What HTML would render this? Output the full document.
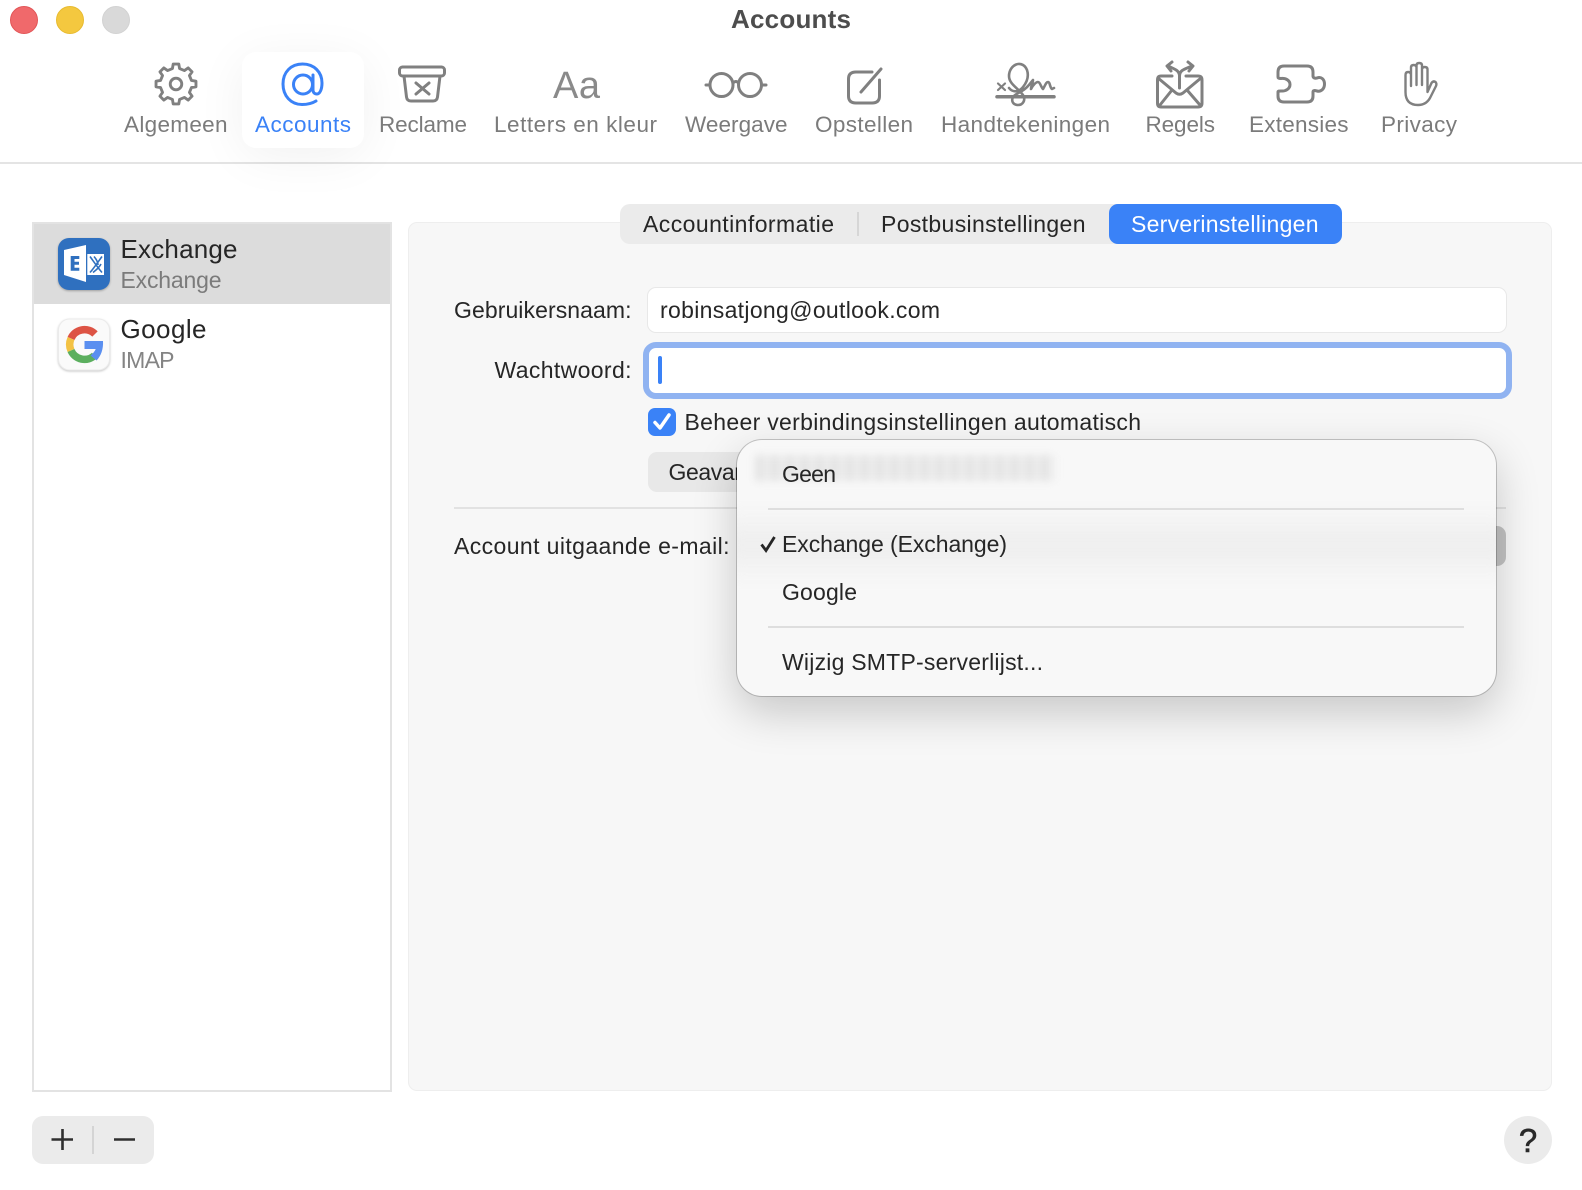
<!DOCTYPE html>
<html><head><meta charset="utf-8"><style>
html,body{margin:0;padding:0;background:#fff;width:1582px;height:1190px;overflow:hidden}
.a{position:absolute}
svg.a{left:0;top:0}
text{font-family:"Liberation Sans",sans-serif;font-size:23px;fill:#262626}
.tb{fill:#7b7b7b;font-size:22.5px}
.ic{fill:none;stroke:#808080;stroke-width:3;stroke-linecap:round;stroke-linejoin:round}
</style></head><body>
<div style="position:relative;width:1582px;height:1190px;overflow:hidden">
<div class="a" style="left:0;top:162px;width:1582px;height:2px;background:#e4e4e4"></div>
<div class="a" style="left:242px;top:52px;width:122px;height:96px;border-radius:14px;background:#fff;box-shadow:0 8px 50px rgba(0,0,0,.06)"></div>
<div class="a" style="left:32px;top:222px;width:356px;height:866px;border:2px solid #e3e3e3;background:#fff"></div>
<div class="a" style="left:34px;top:224px;width:356px;height:80px;background:#dcdcdc"></div>
<div class="a" style="left:408px;top:222px;width:1142px;height:867px;border:1.5px solid #eeeeee;border-radius:9px;background:#f7f7f7"></div>
<div class="a" style="left:620px;top:204px;width:722px;height:40px;border-radius:10px;background:#ebebeb"></div>
<div class="a" style="left:857px;top:212px;width:2px;height:24px;background:#d6d6d6"></div>
<div class="a" style="left:1109px;top:204px;width:233px;height:40px;border-radius:9px;background:#3a82f7"></div>
<div class="a" style="left:647px;top:287px;width:858px;height:44px;border:1.5px solid #e8e8e8;border-radius:9px;background:#fff"></div>
<div class="a" style="left:643px;top:342px;width:857px;height:45px;border:6px solid #90b3f1;border-radius:13px;background:#fff"></div>
<div class="a" style="left:658px;top:356px;width:4px;height:28px;border-radius:2px;background:#3a82f7"></div>
<div class="a" style="left:648px;top:408px;width:28px;height:28px;border-radius:7px;background:#3a82f7"></div>
<div class="a" style="left:648px;top:452px;width:200px;height:40px;border-radius:9px;background:#e8e8e8"></div>
<div class="a" style="left:454px;top:507px;width:1052px;height:2px;background:#e2e2e2"></div>
<div class="a" style="left:1400px;top:526px;width:106px;height:40px;border-radius:9px;background:#c2c2c2"></div>
<div class="a" style="left:32px;top:1116px;width:122px;height:48px;border-radius:11px;background:#ebebeb"></div>
<div class="a" style="left:92px;top:1126px;width:2px;height:28px;background:#d4d4d4"></div>
<div class="a" style="left:1504px;top:1116px;width:48px;height:48px;border-radius:50%;background:#ebebeb"></div>

<svg class="a" width="1582" height="1190" viewBox="0 0 1582 1190">
<circle cx="24" cy="20" r="13.5" fill="#f0696b" stroke="#e25557"/>
<circle cx="70" cy="20" r="13.5" fill="#f4c83f" stroke="#e8bb30"/>
<circle cx="116" cy="20" r="13.5" fill="#d9d9d9" stroke="#d2d2d2"/>
<text x="731" y="28" textLength="120" style="font-size:26px;font-weight:bold;fill:#4d4d4d">Accounts</text>

<g transform="translate(176,84) scale(.96)"><path class="ic" d="M-3.7-16.1L-2.9-20.8 2.9-20.8 3.7-16.1 8.77-14 12.66-16.76 16.76-12.66 14-8.77 16.1-3.7 20.8-2.9 20.8 2.9 16.1 3.7 14 8.77 16.76 12.66 12.66 16.76 8.77 14 3.7 16.1 2.9 20.8-2.9 20.8-3.7 16.1-8.77 14-12.66 16.76-16.76 12.66-14 8.77-16.1 3.7-20.8 2.9-20.8-2.9-16.1-3.7-14-8.77-16.76-12.66-12.66-16.76-8.77-14Z"/><circle class="ic" r="6"/></g>
<g class="ic" style="stroke:#3a82f7;stroke-width:3"><path d="M316 101C312 103.500 307 104.500 302 104.500C291 104.500 283 96 283 84C283 72 291 64 302.500 64C314 64 322 72 322 83C322 90 319.500 94 317 94C314.500 94 313 92.500 313 90V75"/><ellipse cx="303" cy="84.500" rx="9.500" ry="9.500"/></g>
<g class="ic"><rect x="399.500" y="67" width="45" height="9" rx="3"/><path d="M404 76L406.500 97Q407 101 411 101H433Q437 101 437.500 97L440 76M416 83L429 94M429 83L416 94"/></g>
<text x="553" y="98" textLength="47" style="font-size:38px;fill:#8a8a8a">Aa</text>
<g class="ic"><circle cx="721.500" cy="85" r="11.500"/><circle cx="750" cy="85" r="11.500"/><path d="M733 83Q736 80 738.500 83M706 85H710M761.500 85H766"/></g>
<g class="ic"><path d="M872 72H856Q848.500 72 848.500 79V96Q848.500 103 856 103H872Q879.500 103 879.500 96V80"/><path d="M861 92L881 69" style="stroke-width:3"/></g>
<g class="ic" style="stroke-width:2.600"><path d="M997 96.700H1054" style="stroke-width:3.500"/><path d="M1009 88C1013 93 1019 92 1023 87C1027 82 1029 76 1027 70C1025 65 1021 63.500 1018 64C1012 65 1009 71 1009 76C1009 84 1018 88 1023 95C1026 100 1023 105 1018 105C1013 105 1011 101 1013 97C1016 93 1023 92 1028 86C1030 84 1032 81 1033 80C1033 83 1031 86 1031 89C1033 85 1036 82 1038 82C1040 82 1041 87 1043 89C1045 86 1046 82 1048 82C1050 82 1050 88 1052 89L1054 88"/><path d="M998 83.500L1005 90M1005 83.500L998 90" style="stroke-width:2.200"/></g>
<g class="ic"><path d="M1172 76H1161Q1157.500 76 1157.500 80V103Q1157.500 107 1161 107H1198Q1202 107 1202 103V80Q1202 76 1198 76H1186M1158 78L1176 93Q1179.500 95.500 1183 93L1201 78M1160 105L1172 90M1200 105L1187 90"/><path d="M1179.500 88V76C1179.500 70 1174 69 1168 66M1179.500 76C1179.500 70 1185 69 1192 66M1172 62L1167 66L1171 71M1188 62L1193 66L1189 71"/></g>
<path class="ic" d="M1284 66H1307Q1313 66 1313 72V76C1313 78 1315 78.500 1317 78C1321 76.500 1324.500 79 1324.500 84C1324.500 89 1321 92 1317 91C1315 90.500 1313 90 1313 92V96Q1313 102 1307 102H1284Q1278 102 1278 96V92C1278 91 1279 91 1281 91C1286 91.500 1290 88.500 1290 84.500C1290 80.500 1286 78 1281 78.500C1279 78.500 1278 78 1278 77V72Q1278 66 1284 66Z"/>
<path class="ic" style="stroke-width:2.400" d="M1405.500 75Q1405.500 72 1408.200 72Q1411 72 1411 75V86M1411 86V67.500Q1411 65 1413.700 65Q1416.500 65 1416.500 67.500V85M1416.500 85V65.500Q1416.500 63 1419.200 63Q1422 63 1422 65.500V85M1422 85V69.500Q1422 67 1424.700 67Q1427.500 67 1427.500 69.500V92L1431.500 83Q1433.500 80.500 1435.500 82Q1437 83.500 1436 86L1430 98Q1426 105 1418 105Q1405.500 105 1405.500 92V75"/>

<text class="tb" x="124" y="132" textLength="103.500">Algemeen</text>
<text class="tb" x="255" y="132" textLength="96" style="fill:#3a82f7">Accounts</text>
<text class="tb" x="379" y="132" textLength="88">Reclame</text>
<text class="tb" x="494" y="132" textLength="163">Letters en kleur</text>
<text class="tb" x="685" y="132" textLength="102.500">Weergave</text>
<text class="tb" x="815" y="132" textLength="98">Opstellen</text>
<text class="tb" x="941" y="132" textLength="169">Handtekeningen</text>
<text class="tb" x="1145.500" y="132" textLength="69.500">Regels</text>
<text class="tb" x="1249" y="132" textLength="99.500">Extensies</text>
<text class="tb" x="1381" y="132" textLength="76">Privacy</text>

<g style="filter:drop-shadow(0 1px 1px rgba(0,0,0,.28))"><rect x="58" y="238" width="52" height="52" rx="11" fill="#2f70bf"/></g>
<path d="M64 250L86 245V282L64 275Z" fill="#fff"/>
<path d="M70.700 256H79.300V259H74.500V261.700H79V264.700H74.500V267.700H79.300V270.700H70.700Z" fill="#2f70bf"/>
<rect x="87.300" y="254" width="16.700" height="21" fill="#fff"/>
<path d="M90 256.500C94 262 98 268 102 272.500M102 256.500C98 262 94 268 90 272.500M94 256.500C97 260 98 263 98 265M93 272.500C96 270 99 268 101 264" stroke="#2f70bf" stroke-width="1.600" fill="none"/>
<g style="filter:drop-shadow(0 1px 1px rgba(0,0,0,.22))"><rect x="58.500" y="319" width="51" height="51" rx="11" fill="#fafafa" stroke="#ebebeb"/></g>
<path d="M71 338.500A14.750 14.750 0 0 1 95 334" fill="none" stroke="#dd5445" stroke-width="7.500"/>
<path d="M71 338.500A14.750 14.750 0 0 0 71 350.500" fill="none" stroke="#f3c244" stroke-width="7.500"/>
<path d="M71 350.500A14.750 14.750 0 0 0 94.500 355.500" fill="none" stroke="#5caf5f" stroke-width="7.500"/>
<path d="M84.500 341H103C103.500 349 101 356 96.500 360.500L90.500 355.500C93 353.500 95 351 95.700 349H84.500Z" fill="#5a8ff0"/>

<text x="120.500" y="258" textLength="117" style="font-size:26px">Exchange</text>
<text x="120.500" y="288" textLength="101" style="fill:#7b7b7b">Exchange</text>
<text x="120.500" y="338" textLength="86" style="font-size:26px">Google</text>
<text x="120.500" y="368" textLength="54" style="fill:#848484">IMAP</text>

<text x="643" y="232" textLength="191">Accountinformatie</text>
<text x="881" y="232" textLength="204.500">Postbusinstellingen</text>
<text x="1131" y="232" textLength="187.500" style="fill:#fff">Serverinstellingen</text>
<text x="454" y="318" textLength="177.500">Gebruikersnaam:</text>
<text x="660" y="318" textLength="280">robinsatjong@outlook.com</text>
<text x="494.500" y="378" textLength="137">Wachtwoord:</text>
<path d="M655 422.500L660 428L669 415" fill="none" stroke="#fff" stroke-width="3.500" stroke-linecap="round" stroke-linejoin="round"/>
<text x="684.500" y="430" textLength="456.500">Beheer verbindingsinstellingen automatisch</text>
<text x="668.500" y="480" textLength="134">Geavanceerd</text>
<text x="454" y="554" textLength="275.500">Account uitgaande e-mail:</text>
<path d="M51.500 1139.500H73M62.500 1129V1150M114 1139.500H135" stroke="#2f2f2f" stroke-width="2.600" fill="none"/>
<text x="1528" y="1152" text-anchor="middle" style="font-size:33px;fill:#2a2a2a;stroke:#2a2a2a;stroke-width:.6">?</text>
</svg>

<div class="a" style="left:737px;top:440px;width:759px;height:256px;border-radius:25px;background:#f8f8f8;box-shadow:0 0 0 1px rgba(0,0,0,.2),0 16px 44px rgba(0,0,0,.2);overflow:hidden">
<div class="a" style="left:-20px;top:84px;width:800px;height:42px;background:#eeeeee;filter:blur(13px)"></div>
<div class="a" style="left:18px;top:15px;width:300px;height:26px;background:repeating-linear-gradient(90deg,#e4e4e4 0 9px,#eeeeee 9px 15px);filter:blur(4px)"></div>
</div>
<svg class="a" width="1582" height="1190" viewBox="0 0 1582 1190">
<rect x="768" y="508" width="696" height="2" fill="#dedede"/>
<rect x="768" y="626" width="696" height="2" fill="#dedede"/>
<text x="782" y="482" textLength="54">Geen</text>
<path d="M761.500 544.500L766 550.500L774.500 537" fill="none" stroke="#262626" stroke-width="2.800"/>
<text x="782" y="552" textLength="225">Exchange (Exchange)</text>
<text x="782" y="600" textLength="75">Google</text>
<text x="782" y="670" textLength="261">Wijzig SMTP-serverlijst...</text>
</svg>
</div>
</body></html>
